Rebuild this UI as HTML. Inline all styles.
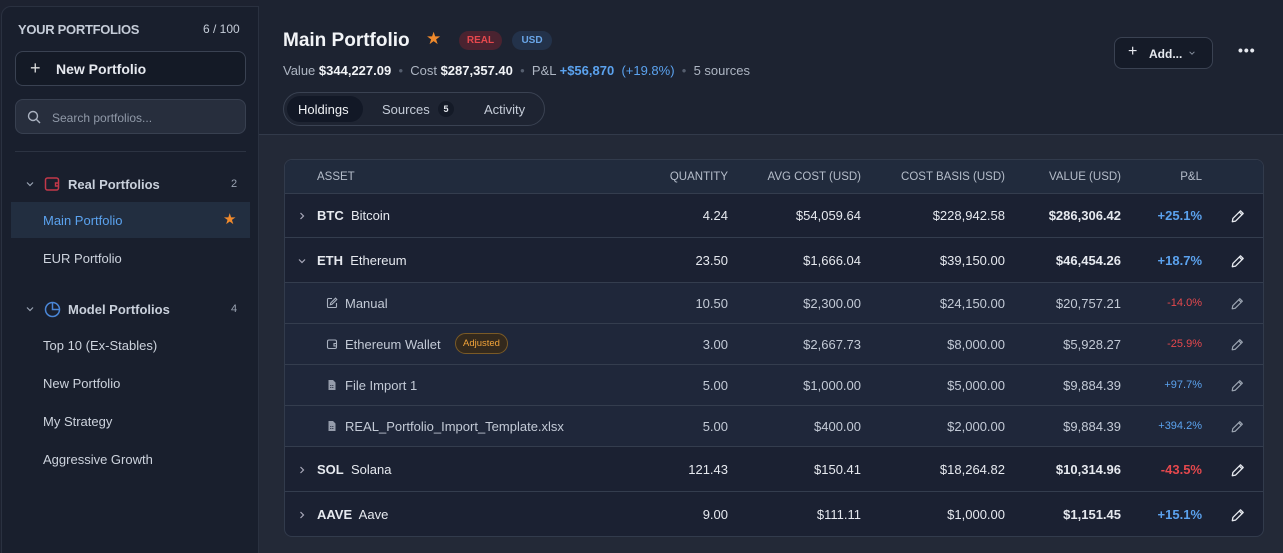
<!DOCTYPE html>
<html><head><style>
*{box-sizing:border-box;margin:0;padding:0}
html,body{width:1283px;height:553px;overflow:hidden}
body{background:#1d2230;font-family:"Liberation Sans",sans-serif;color:#e6e9ef;position:relative}
.sb{position:absolute;left:1px;top:6px;width:258px;height:560px;background:#191f2d;border:1px solid #2a3140;border-radius:10px 0 0 0}
.abs{position:absolute}
.main{position:absolute;left:259px;top:0;right:0;height:135px;background:#1d2331;border-bottom:1px solid #323a4a}
.content{position:absolute;left:259px;top:135px;right:0;bottom:0;background:#232937}
.tbl{position:absolute;left:284px;top:159px;width:980px;height:378px;background:#1b2132;border:1px solid #323b4c;border-radius:8px;overflow:hidden}
.row{position:absolute;left:0;width:980px;border-bottom:1px solid #343d4e;font-size:13px}
.row span,.row svg{position:absolute}
.sub{background:#1f273a;color:#c3cad6}
.hd{background:#212b3d;color:#b5bdca;font-size:11.5px}
.blue{color:#5ba2ee}.red{color:#e5484d}
</style></head><body>
<svg width="0" height="0" style="position:absolute"><defs>
<symbol id="pen" viewBox="0 0 14 14"><path d="M9.5 1.8l2.7 2.7-7.6 7.6-3.3.6.6-3.3z M8.3 3l2.7 2.7" fill="none" stroke="currentColor" stroke-width="1.3" stroke-linejoin="round"/></symbol>
<symbol id="chr" viewBox="0 0 10 10"><path d="M3.5 2l3 3-3 3" fill="none" stroke="currentColor" stroke-width="1.2"/></symbol>
<symbol id="chd" viewBox="0 0 10 10"><path d="M2 3.5l3 3 3-3" fill="none" stroke="currentColor" stroke-width="1.2"/></symbol>
<symbol id="edit" viewBox="0 0 12 12"><path d="M6 1.5H2.5a1 1 0 0 0-1 1v7a1 1 0 0 0 1 1h7a1 1 0 0 0 1-1V6" fill="none" stroke="currentColor" stroke-width="1.1"/><path d="M9.5 1.2l1.3 1.3-4.8 4.8-1.7.4.4-1.7z" fill="none" stroke="currentColor" stroke-width="1.1"/></symbol>
<symbol id="wal" viewBox="0 0 12 12"><rect x="1.5" y="2" width="9" height="8.5" rx="1.5" fill="none" stroke="currentColor" stroke-width="1.1"/><path d="M10.5 5.5h-2.5v2.5h2.5" fill="none" stroke="currentColor" stroke-width="1.1"/></symbol>
<symbol id="file" viewBox="0 0 12 12"><path d="M2.5 1h4.5l2.5 2.5v7.5h-7z" fill="currentColor" opacity=".85"/><path d="M4.3 6.5h1M6.3 6.5h1M4.3 8.5h1M6.3 8.5h1" stroke="#1f273a" stroke-width="1"/></symbol>
</defs></svg>
<div class="sb">
 <div class="abs" style="left:16px;top:15px;font-size:13px;color:#c5ccd8;font-weight:bold;letter-spacing:-0.3px">YOUR PORTFOLIOS</div>
 <div class="abs" style="left:201px;top:15px;font-size:12px;color:#c5ccd8">6 / 100</div>
 <div class="abs" style="left:13px;top:44px;width:231px;height:35px;border:1px solid #3a4252;border-radius:8px;background:#141a26"><span class="abs" style="left:14px;top:6px;font-size:18px;color:#ddd">+</span><span class="abs" style="left:40px;top:9px;font-size:14px;font-weight:bold">New Portfolio</span></div>
 <div class="abs" style="left:13px;top:92px;width:231px;height:35px;border:1px solid #384050;border-radius:8px;background:#272e3d"><svg class="abs" style="left:11px;top:10px" width="14" height="14" viewBox="0 0 14 14"><circle cx="6" cy="6" r="4.5" fill="none" stroke="#aab2c0" stroke-width="1.4"/><path d="M9.5 9.5L13 13" stroke="#aab2c0" stroke-width="1.4"/></svg><span class="abs" style="left:36px;top:11px;font-size:12px;color:#9099a8">Search portfolios...</span></div>
 <div class="abs" style="left:13px;top:144px;width:231px;height:1px;background:#2c3342"></div>
 <svg class="abs" style="left:23px;top:172px;color:#9aa3b2" width="10" height="10"><use href="#chd"/></svg>
 <svg class="abs" style="left:42px;top:169px" width="17" height="16" viewBox="0 0 17 16"><rect x="1.5" y="2" width="13" height="12" rx="2" fill="none" stroke="#c2384a" stroke-width="1.5"/><path d="M14.5 7h-3v3h3" fill="none" stroke="#c2384a" stroke-width="1.4"/></svg>
 <span class="abs" style="left:66px;top:170px;font-size:13px;font-weight:bold;color:#c9d0db">Real Portfolios</span>
 <span class="abs" style="left:229px;top:171px;font-size:11px;color:#9aa3b2">2</span>
 <div class="abs" style="left:9px;top:195px;width:239px;height:36px;background:#222e40"></div>
 <span class="abs" style="left:41px;top:206px;font-size:13px;color:#5ba2ee">Main Portfolio</span>
 <span class="abs" style="left:221px;top:203px;font-size:15px;color:#f08a2c">★</span>
 <span class="abs" style="left:41px;top:244px;font-size:13px;color:#cdd3dd">EUR Portfolio</span>
 <svg class="abs" style="left:23px;top:297px;color:#9aa3b2" width="10" height="10"><use href="#chd"/></svg>
 <svg class="abs" style="left:42px;top:294px" width="17" height="17" viewBox="0 0 17 17"><circle cx="8.5" cy="8.5" r="7" fill="none" stroke="#4a86d6" stroke-width="1.5"/><path d="M8.5 1.5v7h7" fill="none" stroke="#4a86d6" stroke-width="1.5"/></svg>
 <span class="abs" style="left:66px;top:295px;font-size:13px;font-weight:bold;color:#c9d0db">Model Portfolios</span>
 <span class="abs" style="left:229px;top:296px;font-size:11px;color:#9aa3b2">4</span>
 <span class="abs" style="left:41px;top:331px;font-size:13px;color:#cdd3dd">Top 10 (Ex-Stables)</span>
 <span class="abs" style="left:41px;top:369px;font-size:13px;color:#cdd3dd">New Portfolio</span>
 <span class="abs" style="left:41px;top:407px;font-size:13px;color:#cdd3dd">My Strategy</span>
 <span class="abs" style="left:41px;top:445px;font-size:13px;color:#cdd3dd">Aggressive Growth</span>
</div>
<div class="main">
 <span class="abs" style="left:24px;top:30px;font-size:19px;font-weight:bold;color:#f2f4f7">Main Portfolio</span>
 <span class="abs" style="left:167px;top:29px;font-size:17px;color:#f08a2c">★</span>
 <span class="abs" style="left:200px;top:31px;width:43px;height:19px;border-radius:10px;background:#4a2330;color:#e5484d;font-size:10px;font-weight:bold;text-align:center;line-height:19px">REAL</span>
 <span class="abs" style="left:253px;top:31px;width:40px;height:19px;border-radius:10px;background:#23324a;color:#6aa6e8;font-size:10px;font-weight:bold;text-align:center;line-height:19px">USD</span>
 <div class="abs" style="left:24px;top:63px;font-size:13px;color:#aeb6c3;white-space:nowrap">Value <b style="color:#f2f4f7">$344,227.09</b> <span style="color:#555e6e">&nbsp;•&nbsp;</span> Cost <b style="color:#f2f4f7">$287,357.40</b> <span style="color:#555e6e">&nbsp;•&nbsp;</span> P&amp;L <b style="color:#5ba2ee">+$56,870</b> &nbsp;<span style="color:#5ba2ee">(+19.8%)</span> <span style="color:#555e6e">&nbsp;•&nbsp;</span> 5 sources</div>
 <div class="abs" style="left:24px;top:92px;width:262px;height:34px;border:1px solid #3a4252;border-radius:17px;background:#1e2432">
  <div class="abs" style="left:3px;top:3px;width:76px;height:26px;border-radius:13px;background:#121826"></div>
  <span class="abs" style="left:14px;top:9px;font-size:13px;color:#f0f2f5">Holdings</span>
  <span class="abs" style="left:98px;top:9px;font-size:13px;color:#c5ccd8">Sources</span>
  <span class="abs" style="left:154px;top:8px;width:16px;height:16px;border-radius:8px;background:#141a27;font-size:9px;font-weight:bold;text-align:center;line-height:16px">5</span>
  <span class="abs" style="left:200px;top:9px;font-size:13px;color:#c5ccd8">Activity</span>
 </div>
 <div class="abs" style="left:855px;top:37px;width:99px;height:32px;border:1px solid #3a4252;border-radius:8px;background:#151b28"><span class="abs" style="left:13px;top:5px;font-size:16px">+</span><span class="abs" style="left:34px;top:9px;font-size:12px;font-weight:bold">Add...</span><svg class="abs" style="left:73px;top:11px;color:#8a93a2" width="8" height="8"><use href="#chd"/></svg></div>
 <span class="abs" style="left:979px;top:42px;font-size:14px;font-weight:bold;letter-spacing:1px">•••</span>
</div>
<div class="content"></div>
<div class="tbl">
 <div class="row hd" style="top:0;height:34px"><span style="left:32px;top:11px">ASSET</span><span style="right:537px;top:11px">QUANTITY</span><span style="right:404px;top:11px">AVG COST (USD)</span><span style="right:260px;top:11px">COST BASIS (USD)</span><span style="right:144px;top:11px">VALUE (USD)</span><span style="right:63px;top:11px">P&amp;L</span></div>

 <div class="row" style="top:34px;height:44px"><svg style="left:12px;top:17px;color:#aab" width="10" height="10"><use href="#chr"/></svg><span style="left:32px;top:14px"><b>BTC</b>&nbsp; Bitcoin</span><span style="right:537px;top:14px">4.24</span><span style="right:404px;top:14px">$54,059.64</span><span style="right:260px;top:14px">$228,942.58</span><span style="right:144px;top:14px;font-weight:bold">$286,306.42</span><span class="blue" style="right:63px;top:14px;font-weight:bold">+25.1%</span><svg style="left:946px;top:15px;color:#e6e9ef" width="14" height="14"><use href="#pen"/></svg></div>
 <div class="row" style="top:78px;height:45px"><svg style="left:12px;top:18px;color:#aab" width="10" height="10"><use href="#chd"/></svg><span style="left:32px;top:15px"><b>ETH</b>&nbsp; Ethereum</span><span style="right:537px;top:15px">23.50</span><span style="right:404px;top:15px">$1,666.04</span><span style="right:260px;top:15px">$39,150.00</span><span style="right:144px;top:15px;font-weight:bold">$46,454.26</span><span class="blue" style="right:63px;top:15px;font-weight:bold">+18.7%</span><svg style="left:946px;top:16px;color:#e6e9ef" width="14" height="14"><use href="#pen"/></svg></div>
 <div class="row sub" style="top:123px;height:41px"><svg style="left:41px;top:14px;color:#aab2c0" width="12" height="12"><use href="#edit"/></svg><span style="left:60px;top:13px">Manual</span><span style="right:537px;top:13px">10.50</span><span style="right:404px;top:13px">$2,300.00</span><span style="right:260px;top:13px">$24,150.00</span><span style="right:144px;top:13px">$20,757.21</span><span class="red" style="right:63px;top:14px;font-size:11px">-14.0%</span><svg style="left:946px;top:14px;color:#9aa3b0" width="13" height="13"><use href="#pen"/></svg></div>
 <div class="row sub" style="top:164px;height:41px"><svg style="left:41px;top:14px;color:#aab2c0" width="12" height="12"><use href="#wal"/></svg><span style="left:60px;top:13px">Ethereum Wallet</span><span style="left:170px;top:9px;height:21px;width:53px;border:1px solid #7a5a26;border-radius:11px;background:#33291d;color:#f2a43a;font-size:9.5px;text-align:center;line-height:19px">Adjusted</span><span style="right:537px;top:13px">3.00</span><span style="right:404px;top:13px">$2,667.73</span><span style="right:260px;top:13px">$8,000.00</span><span style="right:144px;top:13px">$5,928.27</span><span class="red" style="right:63px;top:14px;font-size:11px">-25.9%</span><svg style="left:946px;top:14px;color:#9aa3b0" width="13" height="13"><use href="#pen"/></svg></div>
 <div class="row sub" style="top:205px;height:41px"><svg style="left:41px;top:14px;color:#aab2c0" width="12" height="12"><use href="#file"/></svg><span style="left:60px;top:13px">File Import 1</span><span style="right:537px;top:13px">5.00</span><span style="right:404px;top:13px">$1,000.00</span><span style="right:260px;top:13px">$5,000.00</span><span style="right:144px;top:13px">$9,884.39</span><span class="blue" style="right:63px;top:14px;font-size:11px">+97.7%</span><svg style="left:946px;top:14px;color:#9aa3b0" width="13" height="13"><use href="#pen"/></svg></div>
 <div class="row sub" style="top:246px;height:41px"><svg style="left:41px;top:14px;color:#aab2c0" width="12" height="12"><use href="#file"/></svg><span style="left:60px;top:13px">REAL_Portfolio_Import_Template.xlsx</span><span style="right:537px;top:13px">5.00</span><span style="right:404px;top:13px">$400.00</span><span style="right:260px;top:13px">$2,000.00</span><span style="right:144px;top:13px">$9,884.39</span><span class="blue" style="right:63px;top:14px;font-size:11px">+394.2%</span><svg style="left:946px;top:14px;color:#9aa3b0" width="13" height="13"><use href="#pen"/></svg></div>
 <div class="row" style="top:287px;height:45px"><svg style="left:12px;top:18px;color:#aab" width="10" height="10"><use href="#chr"/></svg><span style="left:32px;top:15px"><b>SOL</b>&nbsp; Solana</span><span style="right:537px;top:15px">121.43</span><span style="right:404px;top:15px">$150.41</span><span style="right:260px;top:15px">$18,264.82</span><span style="right:144px;top:15px;font-weight:bold">$10,314.96</span><span class="red" style="right:63px;top:15px;font-weight:bold">-43.5%</span><svg style="left:946px;top:16px;color:#e6e9ef" width="14" height="14"><use href="#pen"/></svg></div>
 <div class="row" style="top:332px;height:45px"><svg style="left:12px;top:18px;color:#aab" width="10" height="10"><use href="#chr"/></svg><span style="left:32px;top:15px"><b>AAVE</b>&nbsp; Aave</span><span style="right:537px;top:15px">9.00</span><span style="right:404px;top:15px">$111.11</span><span style="right:260px;top:15px">$1,000.00</span><span style="right:144px;top:15px;font-weight:bold">$1,151.45</span><span class="blue" style="right:63px;top:15px;font-weight:bold">+15.1%</span><svg style="left:946px;top:16px;color:#e6e9ef" width="14" height="14"><use href="#pen"/></svg></div>
</div>
</body></html>
